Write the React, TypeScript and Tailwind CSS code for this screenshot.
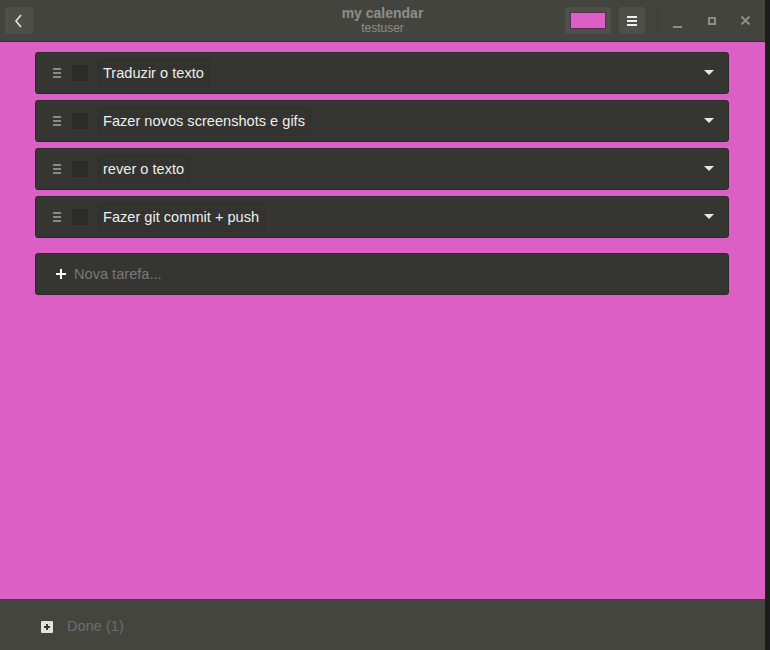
import React from "react";

const tasks = [
  "Traduzir o texto",
  "Fazer novos screenshots e gifs",
  "rever o texto",
  "Fazer git commit + push",
];

function Handle() {
  return (
    <div className="flex flex-col gap-[2px] w-[8px] ml-[17px]">
      <div className="h-[2px] bg-[#8a8a86]" />
      <div className="h-[2px] bg-[#8a8a86]" />
      <div className="h-[2px] bg-[#8a8a86]" />
    </div>
  );
}

function TaskRow({ text }: { text: string }) {
  return (
    <div className="h-[42px] flex items-center bg-[#353531] border border-[#2a2a27] rounded-[3px]">
      <Handle />
      <div className="w-[16px] h-[16px] ml-[11px] rounded-[3px] bg-[#2c2c29] border border-[#292926]" />
      <div className="ml-[10px] h-[29px] flex items-center pl-[4px] pr-[5px] pt-[1px] border border-[#2f2f2c] bg-[#33332f] rounded-[2px] text-[14.6px] text-[#eeeeec]">
        {text}
      </div>
      <div className="flex-1" />
      <svg width="10" height="6" viewBox="0 0 10 6" className="mr-[14px]">
        <polygon points="0,0 10,0 5,5" fill="#e8e8e6" />
      </svg>
    </div>
  );
}

export default function App() {
  return (
    <div
      className="w-[770px] h-[650px] flex bg-[#1c1c1c] overflow-hidden"
      style={{ fontFamily: '"Liberation Sans", Arial, sans-serif' }}
    >
      <div className="w-[765px] h-full flex flex-col">
        {/* Header */}
        <div className="h-[42px] shrink-0 bg-[#44443e] border-b border-[#2f2f2b] flex items-center relative">
          <div className="ml-[5px] w-[28px] h-[27px] bg-[#4f4f49] rounded-[2px] flex items-center justify-center">
            <svg width="10" height="14" viewBox="0 0 10 14">
              <polyline points="7,1 2,7 7,13" fill="none" stroke="#e6e6e3" strokeWidth="1.6" />
            </svg>
          </div>
          <div className="absolute left-0 right-0 top-[5px] flex flex-col items-center pointer-events-none">
            <div className="text-[14px] font-bold text-[#8e8e89] leading-[17px]">my calendar</div>
            <div className="text-[12px] text-[#8e8e89] leading-[13px]">testuser</div>
          </div>
          <div className="flex-1" />
          <div className="w-[46px] h-[27px] bg-[#4f4f49] rounded-[2px] flex items-center justify-center">
            <div className="w-[36px] h-[17px] bg-[#db5fc5] border border-[#5a2a50]" />
          </div>
          <div className="ml-[8px] w-[26px] h-[27px] bg-[#4f4f49] rounded-[2px] flex flex-col items-center justify-center gap-[2px]">
            <div className="w-[10px] h-[2px] bg-[#eeeeec]" />
            <div className="w-[10px] h-[2px] bg-[#eeeeec]" />
            <div className="w-[10px] h-[2px] bg-[#eeeeec]" />
          </div>
          <div className="ml-[12px] w-[1px] h-[30px] bg-[#3a3a35]" />
          <div className="ml-[15px] w-[9px] h-[16px] flex items-end pb-[1px]">
            <div className="w-[9px] h-[2px] bg-[#8e8e89]" />
          </div>
          <div className="ml-[26px] w-[8px] h-[8px] border-2 border-[#8e8e89]" />
          <div className="ml-[25px] mr-[15px] w-[9px] h-[9px] flex items-center justify-center">
            <svg width="9" height="9" viewBox="0 0 9 9">
              <path d="M0.5,0.5 L8.5,8.5 M8.5,0.5 L0.5,8.5" stroke="#8e8e89" strokeWidth="2" />
            </svg>
          </div>
        </div>

        {/* Body */}
        <div className="flex-1 bg-[#db5fc5] px-[35px] pt-[10px] flex flex-col">
          <div className="flex flex-col gap-[6px] w-[694px]">
            {tasks.map((t) => (
              <TaskRow key={t} text={t} />
            ))}
          </div>
          <div className="mt-[15px] w-[694px] h-[42px] flex items-center bg-[#353531] border border-[#2a2a27] rounded-[3px]">
            <svg width="10" height="10" viewBox="0 0 10 10" className="ml-[20px]">
              <path d="M5,0 V10 M0,5 H10" stroke="#ffffff" strokeWidth="2" />
            </svg>
            <span className="ml-[8px] pt-[1px] text-[14.6px] text-[#7a7a76]">Nova tarefa...</span>
          </div>
        </div>

        {/* Footer */}
        <div className="h-[51px] shrink-0 bg-[#45453f] border-t border-[#5a3050] flex items-center pt-[3px]">
          <div className="ml-[41px] w-[12px] h-[12px] bg-[#e2e2df] rounded-[1px] flex items-center justify-center">
            <svg width="8" height="8" viewBox="0 0 8 8">
              <path d="M4,1 V7 M1,4 H7" stroke="#3a3a36" strokeWidth="2" />
            </svg>
          </div>
          <span className="ml-[14px] text-[14.6px] text-[#6a6e72]">Done (1)</span>
        </div>
      </div>
      <div className="w-[5px] h-full bg-[#1c1c1c]" />
    </div>
  );
}
